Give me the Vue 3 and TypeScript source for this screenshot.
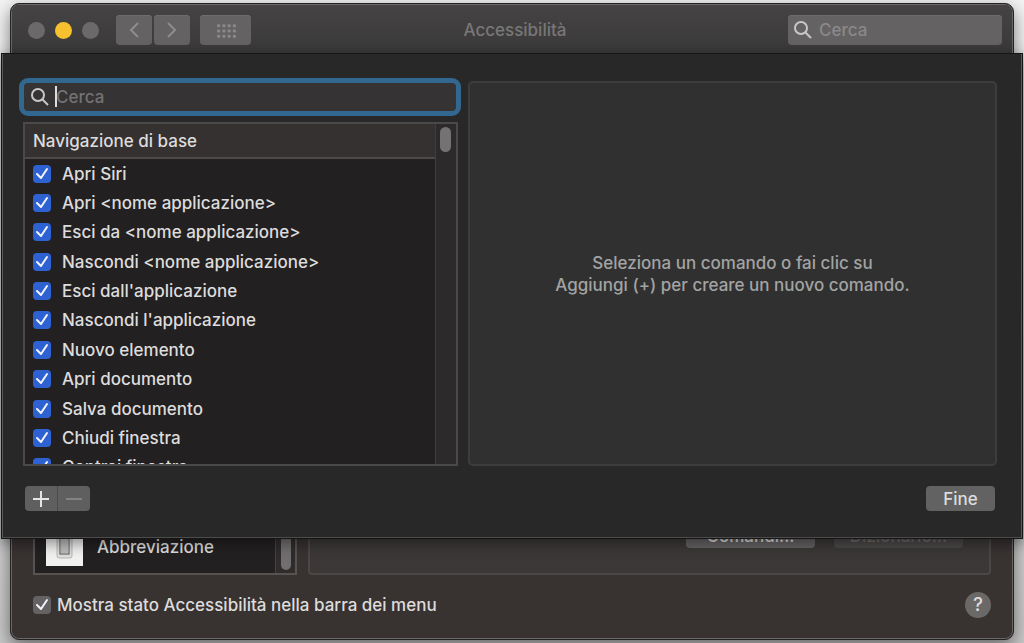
<script setup lang="ts">
import { ref } from 'vue'

interface Command {
  label: string
  enabled: boolean
}

const commands = ref<Command[]>(
  [
    'Apri Siri',
    'Apri <nome applicazione>',
    'Esci da <nome applicazione>',
    'Nascondi <nome applicazione>',
    "Esci dall'applicazione",
    "Nascondi l'applicazione",
    'Nuovo elemento',
    'Apri documento',
    'Salva documento',
    'Chiudi finestra',
    'Contrai finestra',
  ].map((label) => ({ label, enabled: true })),
)

const showStatus = ref(true)
const windowQuery = ref('')
const commandQuery = ref('')
const gridDots = Array.from({ length: 12 }, (_, i) => ({ x: 2 + (i % 4) * 5, y: 2 + Math.floor(i / 4) * 5 }))
</script>

<template>
  <div class="desktop">
    <main class="window">
      <header class="titlebar">
        <div class="tools">
          <div class="lights">
            <button class="light" aria-label="Chiudi"></button>
            <button class="light yellow" aria-label="Contrai"></button>
            <button class="light" aria-label="Ingrandisci"></button>
          </div>
          <div class="nav">
            <button class="tool" aria-label="Indietro">
              <svg width="12" height="18" viewBox="0 0 12 18"><path d="M10 2 3 9l7 7" /></svg>
            </button>
            <button class="tool" aria-label="Avanti">
              <svg width="12" height="18" viewBox="0 0 12 18"><path d="m2 2 7 7-7 7" /></svg>
            </button>
          </div>
          <button class="tool wide" aria-label="Mostra tutte">
            <svg width="20" height="15" viewBox="0 0 19 14">
              <rect v-for="(d, i) in gridDots" :key="i" class="dot" :x="d.x - 1" :y="d.y - 1" width="3" height="3" rx="1" />
            </svg>
          </button>
        </div>
        <h1 class="title">Accessibilità</h1>
        <label class="top-search">
          <svg width="18" height="18" viewBox="0 0 18 18"><circle cx="7" cy="7" r="6" /><path d="m11 11 6 6" /></svg>
          <input v-model="windowQuery" type="text" placeholder="Cerca" aria-label="Cerca" />
        </label>
      </header>

      <div class="body">
        <div class="panes">
          <nav class="sidebar">
            <a class="side-item" href="#abbreviazione">
              <svg class="side-icon" width="37" height="37" viewBox="0 0 37 37">
                <rect width="37" height="37" fill="#f1f1f0" />
                <rect x="11" y="2" width="15" height="27" rx="2" fill="#dedede" stroke="#b8b8b8" />
                <rect x="14" y="5" width="9" height="20" fill="#e9e9e9" stroke="#4e4e4e" />
                <path d="M15 10h7v14h-7z" fill="#bdbdbd" />
              </svg>
              <span>Abbreviazione</span>
            </a>
            <div class="side-track"><div class="side-thumb"></div></div>
          </nav>
          <section class="detail">
            <button class="detail-button">Comandi...</button>
            <button class="detail-button dim" disabled>Dizionario...</button>
          </section>
        </div>
        <footer class="footer">
          <label class="status">
            <span class="tick">
              <input v-model="showStatus" class="box grey" type="checkbox" />
              <svg v-if="showStatus" width="18" height="18" viewBox="0 0 18 18"><path d="m4 9 4 4 6-9" /></svg>
            </span>
            <span>Mostra stato Accessibilità nella barra dei menu</span>
          </label>
          <button class="help" aria-label="Aiuto">?</button>
        </footer>
      </div>
    </main>

    <div class="sheet" role="dialog" aria-label="Comandi">
      <div class="columns">
        <div class="left">
          <label class="search">
            <svg width="18" height="18" viewBox="0 0 18 18"><circle cx="7" cy="7" r="6" /><path d="m11 11 6 6" /></svg>
            <span class="caret"></span>
            <input v-model="commandQuery" type="text" placeholder="Cerca" aria-label="Cerca comandi" />
          </label>
          <div class="list">
            <div class="list-main">
              <h2 class="list-head">Navigazione di base</h2>
              <div class="clip">
                <ul class="rows">
                  <li v-for="c in commands" :key="c.label">
                    <label class="row">
                      <span class="tick">
                        <input v-model="c.enabled" class="box" type="checkbox" />
                        <svg v-if="c.enabled" width="18" height="18" viewBox="0 0 18 18"><path d="m4 9 4 4 6-9" /></svg>
                      </span>
                      <span>{{ c.label }}</span>
                    </label>
                  </li>
                </ul>
              </div>
            </div>
            <div class="track"><div class="thumb"></div></div>
          </div>
        </div>
        <section class="empty">
          <p>Seleziona un comando o fai clic su<br />Aggiungi (+) per creare un nuovo comando.</p>
        </section>
      </div>
      <div class="actions">
        <div class="pair">
          <button aria-label="Aggiungi">
            <svg width="16" height="16" viewBox="0 0 16 16"><path d="M8 0v16M0 8h16" /></svg>
          </button>
          <button class="off" aria-label="Rimuovi" disabled>
            <svg width="16" height="16" viewBox="0 0 16 16"><path d="M0 8h16" /></svg>
          </button>
        </div>
        <button class="done">Fine</button>
      </div>
    </div>
  </div>
</template>

<style>
body {
  margin: 0;
  background: #d0d0d0;
}
</style>

<style scoped>
* {
  box-sizing: border-box;
}

.desktop {
  position: relative;
  display: flex;
  min-height: 100vh;
  padding: 3px 10px;
  overflow: hidden;
  background: linear-gradient(#f4f4f4, #c9c9c9);
  color: #dddcdc;
  font-family: Inter, 'Liberation Sans', sans-serif;
  font-size: 17px;
  font-weight: 500;
  line-height: 22px;
}

button,
input {
  margin: 0;
  padding: 0;
  border: 0;
  color: inherit;
  font: inherit;
}

svg {
  display: block;
  flex: none;
  fill: none;
}

.window {
  display: flex;
  flex: 1;
  flex-direction: column;
  overflow: hidden;
  border: 1px solid #242323;
  border-radius: 9px;
  background: #383231;
  box-shadow: inset 0 0 0 1px #696767, 0 6px 18px rgba(0, 0, 0, 0.5);
}

.titlebar {
  display: grid;
  grid-template-columns: 1fr auto 1fr;
  align-items: center;
  height: 50px;
  margin: 1px 1px 0;
  padding: 0 10px 0 16px;
  border-radius: 8px 8px 0 0;
  background: linear-gradient(#454343, #3a3939);
}

.tools,
.lights,
.nav {
  display: flex;
  align-items: center;
}

.lights {
  gap: 10px;
  margin-right: 17px;
}

.light {
  width: 17px;
  height: 17px;
  border-radius: 50%;
  background: #6c696a;
}

.light.yellow {
  background: #f7c02e;
}

.nav {
  gap: 2px;
  margin-right: 10px;
}

.tool {
  display: grid;
  place-items: center;
  width: 36px;
  height: 30px;
  border-radius: 4px;
  background: #656263;
  box-shadow: inset 0 1px #6f6c6d;
}

.tool.wide {
  width: 51px;
}

.tool svg {
  stroke: #8f8c8d;
  stroke-width: 2;
}

.tool .dot {
  fill: #8b8889;
  stroke: none;
}

.title {
  margin: 0;
  color: #797777;
  font-size: 17px;
  font-weight: 500;
}

.top-search {
  display: flex;
  align-items: center;
  justify-self: end;
  gap: 7px;
  width: 214px;
  height: 30px;
  padding: 0 6px;
  border-radius: 4px;
  background: #656263;
  box-shadow: inset 0 1px #6f6c6d;
}

.top-search svg,
.search svg {
  stroke: #c9c7c7;
  stroke-width: 2;
}

input[type='text'] {
  flex: 1;
  min-width: 0;
  outline: 0;
  background: transparent;
}

.top-search input::placeholder {
  color: #8b8889;
  opacity: 1;
}

.body {
  display: flex;
  flex: 1;
  flex-direction: column;
  padding: 12px 22px 21px;
}

.panes {
  display: flex;
  flex: 1;
  gap: 11px;
}

.sidebar {
  display: flex;
  width: 264px;
  border: 2px solid #575353;
  background: #232021;
}

.side-item {
  display: flex;
  flex: 1;
  align-items: flex-end;
  gap: 14px;
  padding: 0 0 7px 11px;
  color: inherit;
  text-decoration: none;
}

.side-item span {
  padding-bottom: 8px;
}

.side-track {
  display: flex;
  align-items: flex-end;
  justify-content: center;
  width: 20px;
  padding-bottom: 3px;
  border-left: 1px solid #464242;
  background: #302c2c;
}

.side-thumb {
  width: 10px;
  height: 100px;
  border-radius: 5px;
  background: #706e6e;
}

.detail {
  display: flex;
  flex: 1;
  align-items: flex-end;
  justify-content: flex-end;
  gap: 19px;
  padding: 0 26px 25px;
  border: 2px solid #4b4747;
  border-radius: 4px;
  background: #3c3838;
}

.detail-button {
  width: 129px;
  height: 25px;
  border-radius: 4px;
  background: #656263;
}

.detail-button.dim {
  background: #4b4848;
  color: #6d6a6a;
}

.footer {
  display: flex;
  align-items: center;
  justify-content: space-between;
  margin-top: 17px;
}

.status {
  display: flex;
  align-items: center;
  gap: 6px;
}

.help {
  width: 26px;
  height: 26px;
  border-radius: 50%;
  background: #6b6868;
  font-size: 19px;
}

.tick {
  display: grid;
  flex: none;
}

.tick > * {
  grid-area: 1 / 1;
}

.tick svg {
  pointer-events: none;
  stroke: #f2f4fa;
  stroke-width: 2;
  stroke-linecap: round;
  stroke-linejoin: round;
}

.box {
  width: 18px;
  height: 18px;
  border-radius: 4px;
  appearance: none;
  background: #4a4848;
}

.box:checked {
  background: #2e62d3;
}

.box.grey:checked {
  background: #656263;
}

.sheet {
  position: absolute;
  top: 53px;
  right: 1px;
  left: 1px;
  padding: 24px 25px 27px 17px;
  border: 1px solid #151515;
  background: #282828;
  box-shadow: inset 1px 0 #5a5a5a, inset -1px 0 #5a5a5a, inset 0 -1px #4c4c4c, 0 4px 14px rgba(0, 0, 0, 0.45);
}

.columns {
  display: flex;
  gap: 7px;
}

.left {
  width: 442px;
}

.search {
  position: relative;
  display: flex;
  align-items: center;
  gap: 7px;
  height: 38px;
  padding: 0 7px;
  border: 5px solid #32688f;
  border-radius: 9px;
  background: #353333;
}

.search input::placeholder {
  color: #747273;
  opacity: 1;
}

.caret {
  position: absolute;
  top: 3px;
  left: 31px;
  width: 2px;
  height: 21px;
  background: #dddddd;
}

.list {
  display: flex;
  height: 344px;
  margin: 6px 3px 0 4px;
  border: 2px solid #4b4949;
  background: #232021;
}

.list-main {
  display: flex;
  flex: 1;
  flex-direction: column;
}

.list-head {
  margin: 0;
  padding: 6px 8px 5px;
  border-bottom: 2px solid #4b4949;
  background: #353130;
  font-size: 17px;
  font-weight: 500;
}

.clip {
  flex: 1;
  min-height: 0;
  overflow: hidden;
}

.rows {
  display: grid;
  grid-auto-rows: 1fr;
  height: 323px;
  margin: 0;
  padding: 0;
  list-style: none;
}

.row {
  display: flex;
  align-items: center;
  gap: 11px;
  height: 100%;
  padding: 0 8px;
}

.track {
  width: 21px;
  padding: 3px 4px;
  border-left: 1px solid #403e3e;
  background: #2c2a2a;
}

.thumb {
  width: 11px;
  height: 25px;
  border-radius: 6px;
  background: #747272;
}

.empty {
  display: grid;
  flex: 1;
  place-items: center;
  margin-top: 3px;
  border: 2px solid #3d3d3d;
  border-radius: 5px;
  background: #303030;
  color: #a3a3a3;
  text-align: center;
}

.empty p {
  margin: 0;
}

.actions {
  display: flex;
  justify-content: space-between;
  margin-top: 20px;
  padding: 0 2px 0 6px;
}

.pair {
  display: flex;
  overflow: hidden;
  border-radius: 4px;
}

.pair button {
  display: grid;
  place-items: center;
  width: 32px;
  height: 25px;
  background: #5f5f5f;
}

.pair .off {
  width: 33px;
  border-left: 1px solid #4b4b4b;
}

.pair svg {
  stroke: #e4e4e4;
  stroke-width: 2;
}

.pair .off svg {
  stroke: #838383;
}

.done {
  width: 69px;
  height: 25px;
  border-radius: 4px;
  background: #626262;
}
</style>
